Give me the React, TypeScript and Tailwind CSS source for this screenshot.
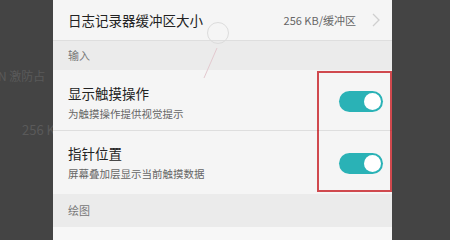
import React from "react";

function Toggle() {
  return (
    <div className="relative w-[44px] h-[21px] rounded-full bg-[#2ab2b6]">
      <div className="absolute right-[2px] top-[2px] w-[17px] h-[17px] rounded-full bg-white" />
    </div>
  );
}

export default function App() {
  const font = { fontFamily: '"Noto Sans CJK SC", "Noto Sans", sans-serif' };
  return (
    <div className="relative w-[450px] h-[240px] overflow-hidden flex bg-[#444444]" style={font}>
      <div className="w-[53px] h-full relative overflow-hidden text-[#5a5a5a]">
        <div className="absolute left-[-2px] top-[68px] text-[12px] whitespace-nowrap leading-[16px]">N 激防占</div>
        <div className="absolute left-[22px] top-[121px] text-[13px] whitespace-nowrap leading-[18px]">256 KB</div>
      </div>
      <div className="w-[339px] h-full bg-[#f5f5f5] flex flex-col">
        <div className="h-[41px] flex items-center pl-[15px] pr-[12px] border-b border-[#dedede]">
          <div className="flex-1 text-[13.5px] text-[#222]">日志记录器缓冲区大小</div>
          <div className="text-[11px] text-[#666] mr-[16px]">256 KB/缓冲区</div>
          <svg width="8" height="14" viewBox="0 0 8 14">
            <path d="M1 1 L7 7 L1 13" fill="none" stroke="#cfcfcf" strokeWidth="1.3" />
          </svg>
        </div>
        <div className="h-[29px] bg-[#ebebeb] flex items-center pl-[15px] text-[11px] text-[#777]">输入</div>
        <div className="h-[61px] flex items-center pl-[15px] pr-[9px] border-b border-[#dedede]">
          <div className="flex-1 flex flex-col pt-[4px]">
            <div className="text-[13.5px] text-[#222] leading-[18px]">显示触摸操作</div>
            <div className="text-[10.5px] text-[#666] leading-[14px] mt-[5px]">为触摸操作提供视觉提示</div>
          </div>
          <div className="mt-[3px]">
            <Toggle />
          </div>
        </div>
        <div className="h-[63px] flex items-center pl-[15px] pr-[9px]">
          <div className="flex-1 flex flex-col">
            <div className="text-[13.5px] text-[#222] leading-[18px]">指针位置</div>
            <div className="text-[10.5px] text-[#666] leading-[14px] mt-[5px]">屏幕叠加层显示当前触摸数据</div>
          </div>
          <div className="mt-[2px]">
            <Toggle />
          </div>
        </div>
        <div className="h-[33px] bg-[#ebebeb] flex items-center pl-[15px] text-[11px] text-[#777]">绘图</div>
        <div className="flex-1 bg-[#f7f7f7]" />
      </div>
      <div className="flex-1 h-full" />
      <div className="absolute left-[317px] top-[71px] w-[75px] h-[121px] border-2 border-red-700/70" />
      <div className="absolute left-[207px] top-[22px] w-[22px] h-[22px] rounded-full border-[length:1.5px] border-solid border-[#dcdcdc]" />
      <svg className="absolute left-0 top-0" width="450" height="240">
        <line x1="217" y1="48" x2="204" y2="78" stroke="#e3c9cf" strokeWidth="1" />
      </svg>
    </div>
  );
}
